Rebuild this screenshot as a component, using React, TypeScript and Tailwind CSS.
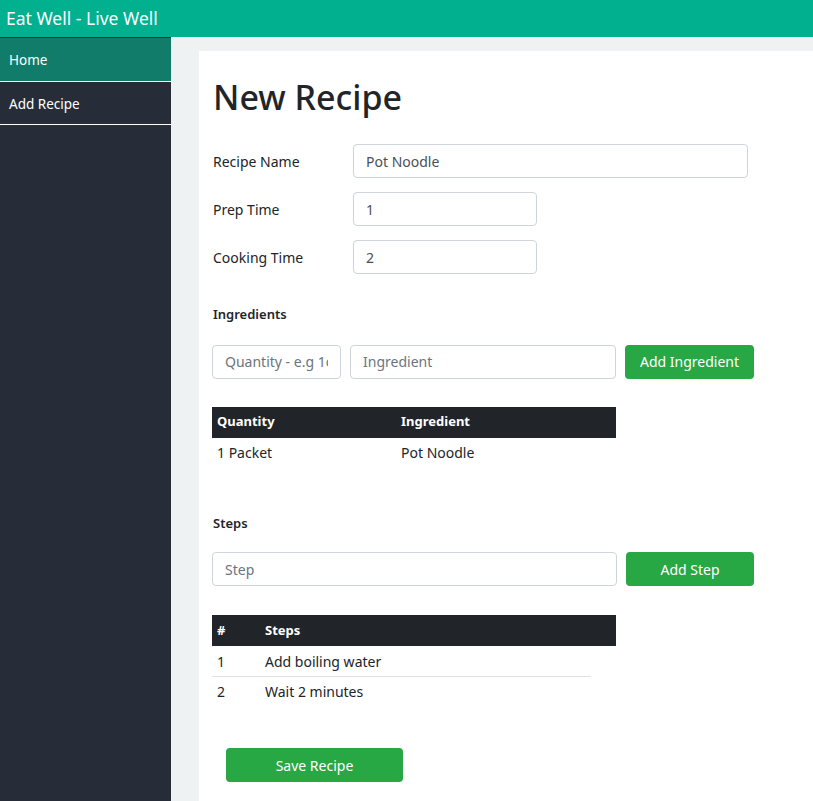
const ingredients = [{ quantity: '1 Packet', name: 'Pot Noodle' }];
const steps = ['Add boiling water', 'Wait 2 minutes'];

const inputCls =
  'h-[34px] rounded border border-[#ced4da] bg-white px-3 text-[14px] text-[#495057] placeholder:text-[#6c757d] outline-none';

const FormRow = ({ label, value, width }: { label: string; value: string; width: string }) => (
  <div className="flex items-center">
    <label className="w-[140px] text-[14px] text-[#212529]">{label}</label>
    <input className={`${inputCls} ${width}`} defaultValue={value} />
  </div>
);

export default function App() {
  return (
    <div className="flex h-[801px] flex-col overflow-hidden font-['Noto_Sans',sans-serif] text-[#212529]">
      {/* Top bar */}
      <header className="flex h-[37px] shrink-0 items-center bg-[#00b08f] px-[6px]">
        <span className="text-[17.5px] text-white">Eat Well - Live Well</span>
      </header>

      <div className="flex flex-1">
        {/* Sidebar */}
        <nav className="w-[171px] shrink-0 bg-[#262d38] pt-px">
          <a className="flex h-[44px] items-center border-b border-white bg-[#127c6a] px-[9px] pt-px text-[13.5px] text-white">
            Home
          </a>
          <a className="flex h-[43px] items-center border-b border-white px-[9px] pt-[2px] text-[13.5px] text-white">
            Add Recipe
          </a>
        </nav>

        {/* Main */}
        <main className="flex-1 bg-[#eef2f3] pl-[28px] pt-[14px]">
          <div className="h-full bg-white pl-[14px] pt-[21px]">
            <h1 className="text-[34px] font-medium leading-[50px]">New Recipe</h1>

            <div className="mt-[22px] flex flex-col gap-[14px]">
              <FormRow label="Recipe Name" value="Pot Noodle" width="w-[395px]" />
              <FormRow label="Prep Time" value="1" width="w-[184px]" />
              <FormRow label="Cooking Time" value="2" width="w-[184px]" />
            </div>

            <h2 className="mt-[31px] text-[13px] font-semibold">Ingredients</h2>
            <div className="-ml-px mt-[20px] flex gap-[9px]">
              <input className={`${inputCls} w-[129px]`} placeholder="Quantity - e.g 1cup" />
              <input className={`${inputCls} w-[266px]`} placeholder="Ingredient" />
              <button className="h-[34px] w-[129px] rounded bg-[#28a745] text-[14px] text-white">
                Add Ingredient
              </button>
            </div>

            <table className="-ml-px mt-[28px] w-[404px] text-left text-[14px]">
              <thead className="bg-[#212529] text-[13px] text-white">
                <tr className="h-[31px]">
                  <th className="w-[189px] pl-[5px] font-bold">Quantity</th>
                  <th className="font-bold">Ingredient</th>
                </tr>
              </thead>
              <tbody>
                {ingredients.map((i) => (
                  <tr key={i.name} className="h-[30px]">
                    <td className="pl-[5px]">{i.quantity}</td>
                    <td>{i.name}</td>
                  </tr>
                ))}
              </tbody>
            </table>

            <h2 className="mt-[46px] text-[13px] font-semibold">Steps</h2>
            <div className="-ml-px mt-[19px] flex gap-[9px]">
              <input className={`${inputCls} w-[405px]`} placeholder="Step" />
              <button className="h-[34px] w-[128px] rounded bg-[#28a745] text-[14px] text-white">
                Add Step
              </button>
            </div>

            <table className="-ml-px mt-[29px] w-[404px] text-left text-[14px]">
              <thead className="bg-[#212529] text-[13px] text-white">
                <tr className="h-[31px]">
                  <th className="w-[53px] pl-[5px] font-bold">#</th>
                  <th className="font-bold">Steps</th>
                </tr>
              </thead>
              <tbody>
                {steps.map((s, n) => (
                  <tr key={s} className="h-[30px]">
                    <td className="pl-[5px]">{n + 1}</td>
                    <td>{s}</td>
                  </tr>
                ))}
              </tbody>
            </table>
            <div className="-ml-px -mt-[30px] mb-[29px] w-[379px] border-t border-[#dee2e6]" />

            <button className="ml-[13px] mt-[42px] h-[34px] w-[177px] rounded bg-[#28a745] text-[14px] text-white">
              Save Recipe
            </button>
          </div>
        </main>
      </div>
    </div>
  );
}
